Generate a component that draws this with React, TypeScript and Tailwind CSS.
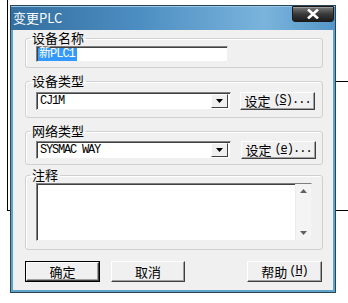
import React from "react";

const CJK = "font-['Noto_Sans_CJK_SC','Noto_Sans',sans-serif]";
const MONO = "font-['Liberation_Mono','Noto_Sans_CJK_SC',monospace]";

function Raised({ children, className = "", isDefault = false }: { children: React.ReactNode; className?: string; isDefault?: boolean }) {
  return (
    <div className={`${isDefault ? "border border-black" : ""} ${className}`}>
      <div className="h-full w-full bg-[#f0f0f0] border border-t-white border-l-white border-b-[#404040] border-r-[#404040] shadow-[inset_-1px_-1px_0_#a0a0a0] flex items-center justify-center pb-[1px]">
        {children}
      </div>
    </div>
  );
}

function Combo({ value }: { value: string }) {
  return (
    <div className="w-[195px] h-full bg-white border border-t-[#808080] border-l-[#808080] border-b-[#f0f0f0] border-r-[#f0f0f0] shadow-[inset_1px_1px_0_#404040] flex items-center pl-[3px] pr-[2px]">
      <span className={`${MONO} text-[12px] tracking-[-1.2px] text-black flex-1 leading-[14px]`}>{value}</span>
      <div className="w-[17px] h-[14px] bg-[#f0f0f0] border border-t-white border-l-white border-b-[#404040] border-r-[#404040] flex items-center justify-center">
        <svg width="7" height="4" viewBox="0 0 7 4"><path d="M0 0h7L3.5 4z" fill="#000" /></svg>
      </div>
    </div>
  );
}

function Setting({ letter }: { letter: string }) {
  return (
    <Raised className="w-[75px] h-full">
      <span className={`${CJK} text-[13px] text-black leading-[15px]`}>设定</span>
      <span className={`${MONO} text-[12px] tracking-[-1px] text-black leading-[15px] ml-[3px]`}>
        (<span className="underline underline-offset-1">{letter}</span>)...
      </span>
    </Raised>
  );
}

function Group({ label, className, children }: { label: string; className: string; children: React.ReactNode }) {
  return (
    <fieldset className={`border border-[#d0d0d0] rounded-[3px] shadow-[inset_1px_1px_0_#ffffff] ${className}`}>
      <legend className={`${CJK} text-[13px] leading-[14px] text-black ml-[4px] px-[2px]`}>{label}</legend>
      <div className="pl-[10px]">{children}</div>
    </fieldset>
  );
}

export default function App() {
  return (
    <div className="relative w-[348px] h-[303px] bg-white overflow-hidden">
      {/* background lines behind the dialog */}
      <div className="absolute left-[7px] top-0 w-px h-[211px] bg-black" />
      <div className="absolute left-[7px] top-[210px] w-[4px] h-px bg-black" />
      <div className="absolute left-[336px] top-[81px] w-[12px] h-px bg-black" />
      <div className="absolute left-[336px] top-[210px] w-[12px] h-px bg-black" />

      <div className="absolute left-[10px] top-[5px] w-[326px] h-[288px] border border-[#27465a] bg-[#5fa3c6] flex flex-col">
        {/* title bar */}
        <div className="h-[24px] shrink-0 flex items-center justify-between bg-[linear-gradient(to_right,#336fa0,#4d8ec2_40%,#7ab4dc_78%,#5496c8)] shadow-[inset_0_1px_0_#9cc8e6]">
          <span className={`${CJK} text-[13px] text-white pl-[2px] leading-[16px]`}>变更PLC</span>
          <div className="w-[42px] h-[16px] mr-[1px] -mt-[8px] rounded-b-[3px] border border-[#1a1a1a] bg-[linear-gradient(to_bottom,#7a7a7a,#3a3a3a_50%,#1c1c1c)] shadow-[inset_0_1px_0_#9a9a9a] flex items-center justify-center">
            <svg width="12" height="10" viewBox="0 0 12 10">
              <path d="M1 0.5l10 9M11 0.5l-10 9" stroke="#fff" strokeWidth="2.6" />
            </svg>
          </div>
        </div>

        {/* client area */}
        <div className="flex-1 mx-[2px] mb-[2px] bg-[#f0f0f0] pl-[12px] pr-[10px] flex flex-col">
          <Group label="设备名称" className="mt-[1px] h-[37px]">
            <div className="pt-[1px]">
              <div className="w-[192px] h-[16px] bg-white border border-t-[#808080] border-l-[#808080] border-b-[#f0f0f0] border-r-[#f0f0f0] shadow-[inset_1px_1px_0_#404040] flex items-center pl-[1px]">
                <span className={`${MONO} bg-[#3399ff] text-white text-[12px] leading-[13px] tracking-[-1px] pl-[1px] pr-[2px]`}>新PLC1</span>
              </div>
            </div>
          </Group>

          <Group label="设备类型" className="mt-[6px] h-[44px]">
            <div className="pt-[4px] h-[22px] flex gap-[9px]">
              <Combo value="CJ1M" />
              <Setting letter="S" />
            </div>
          </Group>

          <Group label="网络类型" className="mt-[6px] h-[41px]">
            <div className="pt-[3px] h-[21px] flex gap-[10px]">
              <Combo value="SYSMAC WAY" />
              <Setting letter="e" />
            </div>
          </Group>

          <Group label="注释" className="mt-[3px] h-[82px]">
            <div className="pt-[1px]">
              <div className="w-[276px] h-[58px] bg-white border border-t-[#808080] border-l-[#808080] border-b-[#f0f0f0] border-r-[#f0f0f0] shadow-[inset_1px_1px_0_#404040] flex justify-end">
                <div className="w-[16px] h-full bg-[#f4f4f4] border-l border-[#ececec] flex flex-col justify-between items-center py-[5px]">
                  <svg width="7" height="4" viewBox="0 0 7 4"><path d="M3.5 0L7 4H0z" fill="#606060" /></svg>
                  <svg width="7" height="4" viewBox="0 0 7 4"><path d="M0 0h7L3.5 4z" fill="#606060" /></svg>
                </div>
              </div>
            </div>
          </Group>

          <div className="mt-[11px] h-[21px] flex">
            <Raised isDefault className="w-[75px] h-full">
              <span className={`${CJK} text-[13px] text-black leading-[15px]`}>确定</span>
            </Raised>
            <Raised className="ml-[11px] w-[74px] h-full">
              <span className={`${CJK} text-[13px] text-black leading-[15px]`}>取消</span>
            </Raised>
            <Raised className="ml-auto mr-[1px] w-[75px] h-full">
              <span className={`${CJK} text-[13px] text-black leading-[15px]`}>帮助</span>
              <span className={`${MONO} text-[12px] tracking-[-1px] text-black leading-[15px] ml-[2px]`}>
                (<span className="underline underline-offset-1">H</span>)
              </span>
            </Raised>
          </div>
        </div>
      </div>
    </div>
  );
}
